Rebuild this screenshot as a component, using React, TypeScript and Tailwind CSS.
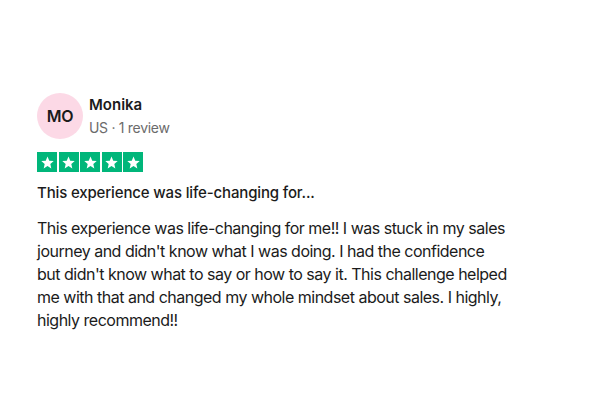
import React from 'react';

const Star: React.FC = () => (
  <div className="w-[20px] h-[20px] bg-[#00b67a] flex items-center justify-center">
    <svg viewBox="0 0 24 24" className="w-[15px] h-[15px]" fill="#ffffff">
      <path d="M12 2.5l2.8 6.6 7.1.6-5.4 4.7 1.6 7-6.1-3.7-6.1 3.7 1.6-7L2.1 9.7l7.1-.6z" />
    </svg>
  </div>
);

const App: React.FC = () => {
  return (
    <div className="w-[600px] h-[400px] bg-white pl-[37px] pt-[93px] text-[#1b1b1b]" style={{ fontFamily: 'Inter, "Noto Sans", sans-serif' }}>
      <div className="flex items-center gap-[6px]">
        <div className="w-[46px] h-[46px] rounded-full bg-[#fcd9e6] flex items-center justify-center">
          <span className="text-[16px] font-semibold tracking-tight">MO</span>
        </div>
        <div className="flex flex-col">
          <span className="text-[15px] font-semibold leading-[20px]">Monika</span>
          <span className="text-[14px] text-[#6b6b6b] leading-[20px] mt-[3px] tracking-[-0.3px]">US · 1 review</span>
        </div>
      </div>

      <div className="flex gap-[1.5px] mt-[13px]">
        <Star />
        <Star />
        <Star />
        <Star />
        <Star />
      </div>

      <h3 className="text-[15px] font-medium mt-[10px] leading-[22px] tracking-[-0.15px]">This experience was life-changing for...</h3>

      <p className="text-[16px] leading-[23px] mt-[13px] tracking-[-0.5px] whitespace-nowrap">
        This experience was life-changing for me!! I was stuck in my sales
        <br />
        journey and didn't know what I was doing. I had the confidence
        <br />
        but didn't know what to say or how to say it. This challenge helped
        <br />
        me with that and changed my whole mindset about sales. I highly,
        <br />
        highly recommend!!
      </p>
    </div>
  );
};

export default App;
